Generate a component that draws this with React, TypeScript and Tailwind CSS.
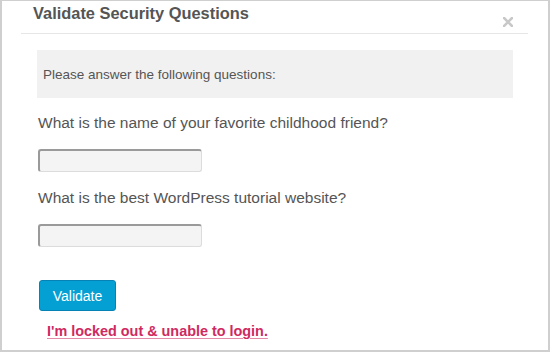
export default function App() {
  return (
    <div className="w-[550px] h-[352px] bg-white border-t border-x-2 border-b-2 border-[#cfcfcf] font-['Liberation_Sans',Arial,sans-serif] overflow-hidden">
      {/* header */}
      <div className="ml-[19px] mr-[20px] h-[33px] border-b border-[#e6e6e6] flex items-start justify-between pl-[12px] pr-[15px]">
        <h1 className="mt-[2px] text-[16.4px] leading-[20px] font-bold text-[#555]">
          Validate Security Questions
        </h1>
        <svg width="10" height="10" viewBox="0 0 10 10" className="mt-[16px]">
          <path d="M1 1 L9 9 M9 1 L1 9" stroke="#c8c8c8" strokeWidth="2.6" strokeLinecap="square" />
        </svg>
      </div>

      <div className="ml-[35px] mr-[35px]">
        <div className="mt-[16px] h-[48px] bg-[#f1f1f1] flex items-center pl-[6px] pt-[2px]">
          <p className="text-[13.5px] text-[#555]">Please answer the following questions:</p>
        </div>

        <div className="pl-[1px]">
          <p className="mt-[15px] text-[15.5px] leading-[20px] text-[#555]">
            What is the name of your favorite childhood friend?
          </p>
          <input
            type="text"
            className="mt-[16px] block w-[164px] h-[23px] rounded-[3px] bg-[#f4f4f4] border border-[#dcdcdc] border-t-2 border-t-[#9a9a9a] border-l-2 border-l-[#9a9a9a] outline-none"
          />

          <p className="mt-[16px] text-[15.5px] leading-[20px] text-[#555]">
            What is the best WordPress tutorial website?
          </p>
          <input
            type="text"
            className="mt-[16px] block w-[164px] h-[23px] rounded-[3px] bg-[#f4f4f4] border border-[#dcdcdc] border-t-2 border-t-[#9a9a9a] border-l-2 border-l-[#9a9a9a] outline-none"
          />

          <button className="mt-[33px] ml-[1px] block w-[77px] h-[31px] rounded-[3px] bg-[#04a0d4] border border-[#0682b4] text-white text-[14px] leading-none">
            Validate
          </button>

          <a
            href="#"
            className="mt-[11px] ml-[9px] inline-block text-[14.4px] leading-[18px] font-bold text-[#cf2a5f] underline decoration-[#e58aa6] underline-offset-2"
          >
            I'm locked out &amp; unable to login.
          </a>
        </div>
      </div>
    </div>
  );
}
